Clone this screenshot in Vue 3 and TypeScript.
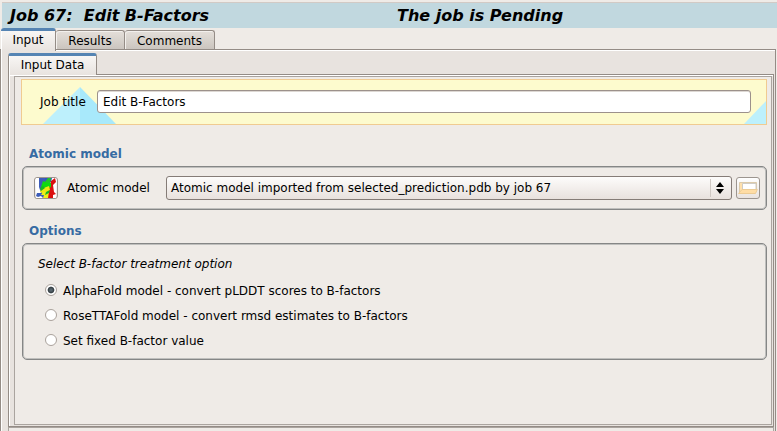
<script setup lang="ts">
import { ref } from 'vue'

const mainTabs = ['Input', 'Results', 'Comments']
const activeTab = ref('Input')
const jobTitle = ref('Edit B-Factors')
const treatments = [
  { id: 'alphafold', label: 'AlphaFold model - convert pLDDT scores to B-factors' },
  { id: 'rosetta', label: 'RoseTTAFold model - convert rmsd estimates to B-factors' },
  { id: 'fixed', label: 'Set fixed B-factor value' },
]
const treatment = ref('alphafold')
</script>

<template>
  <div class="window">
    <header class="job-header">
      <span class="job-name">Job 67:&nbsp; Edit B-Factors</span>
      <span class="job-status">The job is Pending</span>
    </header>

    <nav class="tabs">
      <button
        v-for="tab in mainTabs"
        :key="tab"
        class="tab"
        :class="[tab.toLowerCase(), { active: tab === activeTab }]"
        @click="activeTab = tab"
      >{{ tab }}</button>
    </nav>

    <div class="outer-pane">
      <nav class="sub-tabs"><button class="tab active input-data">Input Data</button></nav>
      <div class="inner-pane">
        <main class="content">
          <section class="title-box">
            <svg class="backdrop" width="744" height="44" viewBox="0 0 744 44">
              <path d="M58 7V44H21Z" fill="#bdf0fc" />
              <path d="M58 7L94 44H58Z" fill="#a8e9fb" />
              <path d="M744 21V44H722Z" fill="#bdf0fc" />
            </svg>
            <label class="title-label" for="job-title">Job title</label>
            <input id="job-title" v-model="jobTitle" class="title-input" type="text" />
          </section>

          <h2 class="heading atomic-heading">Atomic model</h2>
          <section class="group atomic-group">
            <button class="icon-button model-button">
              <svg width="20" height="20" viewBox="0 0 20 20">
                <rect width="20" height="20" fill="#fff" />
                <path d="M3 0H10L11 9L8 12L8 20H7L5 18L2 19L0 18L1 15L5 15L3 9Z" fill="#3d5cb8" />
                <path d="M9 0H16L15 4L10 5Z" fill="#3155c4" />
                <path d="M19 0L20 4L17 7L18 14L20 16L17 17V20H10L11 15L9 13L11 8L14 6L15 3Z" fill="#db1010" />
                <path d="M12 0H15L14 6L11 8L8 5Z" fill="#1fc52a" />
                <path d="M7 3L11 5L15 5L15 9L9 12L5 9Z" fill="#0edb10" />
                <path d="M5 11L13 8L14 12L8 16L4 14Z" fill="#ece713" />
                <path d="M7 14L13 14L12 20H7L8 17L5 17Z" fill="#eef018" />
                <path d="M4 10L7 8L9 10L5 13ZM10 14L14 12L13 15L9 17Z" fill="#16b921" />
              </svg>
            </button>
            <span class="atomic-label">Atomic model</span>
            <button class="combo">
              <span>Atomic model imported from selected_prediction.pdb by job 67</span>
              <span class="combo-arrows">
                <svg width="8" height="12" viewBox="0 0 8 12">
                  <path d="M4 0L8 5H0ZM4 12L0 7H8Z" fill="#000" />
                </svg>
              </span>
            </button>
            <button class="icon-button folder-button">
              <svg width="20" height="14" viewBox="0 0 20 14">
                <path d="M1.5 11V1.5H18.5V9" fill="#ffe0ac" stroke="#dccaa9" />
                <path d="M4.5 2.5H18V8.5H4.5Z" fill="#fff" stroke="#d0ccc5" />
                <path d="M.6 12.5L4 8.5H19.3L17.5 12.5Z" fill="#ffdda5" stroke="#eccb94" />
              </svg>
            </button>
          </section>

          <h2 class="heading options-heading">Options</h2>
          <section class="group options-group">
            <p class="prompt">Select B-factor treatment option</p>
            <label v-for="item in treatments" :key="item.id" class="radio-row">
              <input v-model="treatment" class="radio" type="radio" name="treatment" :value="item.id" />
              <span>{{ item.label }}</span>
            </label>
          </section>
        </main>
      </div>
      <div class="lower-pane"></div>
    </div>
  </div>
</template>

<style>
body {
  background: #efebe7;
  overflow: hidden;
}
</style>

<style scoped>
* {
  box-sizing: border-box;
}

.window {
  width: 777px;
  height: 431px;
  padding-top: 2px;
  overflow: hidden;
  display: flex;
  flex-direction: column;
  background: #efebe7;
  color: #000;
  font: 12px/16px "DejaVu Sans", sans-serif;
}

button,
input {
  font: inherit;
  color: inherit;
  margin: 0;
  padding: 0;
}

.job-header {
  flex: none;
  height: 26px;
  margin-left: 2px;
  border-top: 1px solid #d2cac5;
  background: #c1d8df;
  display: flex;
  align-items: center;
  font-size: 16px;
  font-weight: bold;
  font-style: italic;
  white-space: nowrap;
}

.job-name {
  width: 388px;
  padding-left: 8px;
}

.job-status {
  padding-left: 7px;
}

.tabs {
  flex: none;
  height: 21px;
  display: flex;
  align-items: flex-end;
  padding-left: 1px;
}

.tab {
  flex: none;
  height: 19px;
  border: 1px solid #948c86;
  border-left-width: 0;
  border-bottom: 0;
  border-radius: 3px 3px 0 0;
  background: linear-gradient(#e4dfda, #cbc5bf);
  box-shadow: inset 1px 1px #f3f0ed;
  white-space: nowrap;
}

.tab.active {
  border-top: 3px solid #5584b3;
  background: linear-gradient(#f8f6f4, #e8e3df);
  box-shadow: inset 1px 0 #fff;
  position: relative;
  z-index: 1;
}

.tab.input {
  width: 55px;
  height: 23px;
  margin-bottom: -2px;
  padding-bottom: 2px;
}

.tab.results {
  width: 69px;
  padding-top: 2px;
}

.tab.comments {
  width: 90px;
  padding-top: 2px;
}

.outer-pane {
  flex: 1;
  min-height: 0;
  margin-right: 1px;
  border: 1px solid #948c86;
  border-bottom: 0;
  box-shadow: inset 1px 1px #fff;
  background: #e8e3df;
  padding: 3px 1px 0 7px;
  display: flex;
  flex-direction: column;
}

.sub-tabs {
  height: 21px;
  flex: none;
}

.tab.input-data {
  display: block;
  width: 89px;
  height: 22px;
  padding-bottom: 2px;
  border-left-width: 1px;
}

.inner-pane {
  flex: none;
  height: 353px;
  border: 1px solid #948c86;
  box-shadow: inset 1px 1px #fff;
  padding: 1px 1px 1px 5px;
  display: flex;
}

.content {
  flex: 1;
  min-width: 0;
  border: 1px solid #aaa49f;
  background: #efebe7;
  padding: 2px 4px 0 6px;
}

.title-box {
  position: relative;
  width: 746px;
  height: 46px;
  border: 1px solid #f0cb91;
  background: #fdfbce;
  display: flex;
  align-items: center;
  padding-left: 18px;
}

.backdrop {
  position: absolute;
  inset: 0;
}

.title-label {
  position: relative;
  width: 57px;
}

.title-input {
  position: relative;
  width: 654px;
  height: 23px;
  margin-top: -1px;
  padding: 0 5px;
  border: 1px solid #9c918b;
  border-radius: 3px;
  background: #fff;
  outline: none;
  box-shadow: inset 0 1px #ddd8d3;
}

.heading {
  margin: 0 0 0 8px;
  color: #376ba3;
  font: bold 12px/16px "DejaVu Sans", sans-serif;
}

.atomic-heading {
  margin-top: 21px;
}

.options-heading {
  margin-top: 13px;
}

.group {
  width: 745px;
  border: 1px solid #858686;
  border-radius: 5px;
  box-shadow: inset 0 0 0 1px #bfbfbd;
  margin-left: 1px;
}

.atomic-group {
  height: 44px;
  margin-top: 4px;
  padding: 0 5px 0 11px;
  display: flex;
  align-items: center;
}

.icon-button {
  flex: none;
  width: 24px;
  height: 22px;
  border: 1px solid #9c958f;
  border-radius: 3px;
  background: linear-gradient(#fff, #e9e3df);
  display: flex;
  align-items: center;
  justify-content: center;
}

.atomic-label {
  width: 99px;
  margin-left: 9px;
}

.combo {
  width: 566px;
  height: 24px;
  padding: 0 0 0 4px;
  margin-top: -1px;
  border: 1px solid #857c77;
  border-radius: 3px;
  background: linear-gradient(#fdfcfb, #e8e1dd);
  display: flex;
  align-items: center;
  justify-content: space-between;
  white-space: nowrap;
}

.combo-arrows {
  width: 21px;
  height: 18px;
  padding-left: 5px;
  border-left: 1px solid #cfc8c3;
  display: flex;
  align-items: center;
}

.folder-button {
  margin-left: 4px;
}

.options-group {
  height: 117px;
  margin-top: 4px;
  padding: 12px 0 0 14px;
}

.prompt {
  margin: 0 0 11px;
  padding-left: 1px;
  font-style: italic;
}

.radio-row {
  height: 16px;
  margin: 0 0 9px 8px;
  display: flex;
  align-items: center;
}

.radio {
  appearance: none;
  width: 12px;
  height: 12px;
  margin-right: 6px;
  margin-top: -2px;
  border: 1px solid #aaa29c;
  border-radius: 50%;
  background: #fff;
}

.radio:checked {
  background: radial-gradient(circle at 50% 50%, #56646c 0 1px, #343d42 2.8px, #fff 3.8px);
}

.lower-pane {
  flex: none;
  height: 10px;
  margin-top: 0;
  border: 1px solid #aaa49f;
  background: #efebe7;
}
</style>
